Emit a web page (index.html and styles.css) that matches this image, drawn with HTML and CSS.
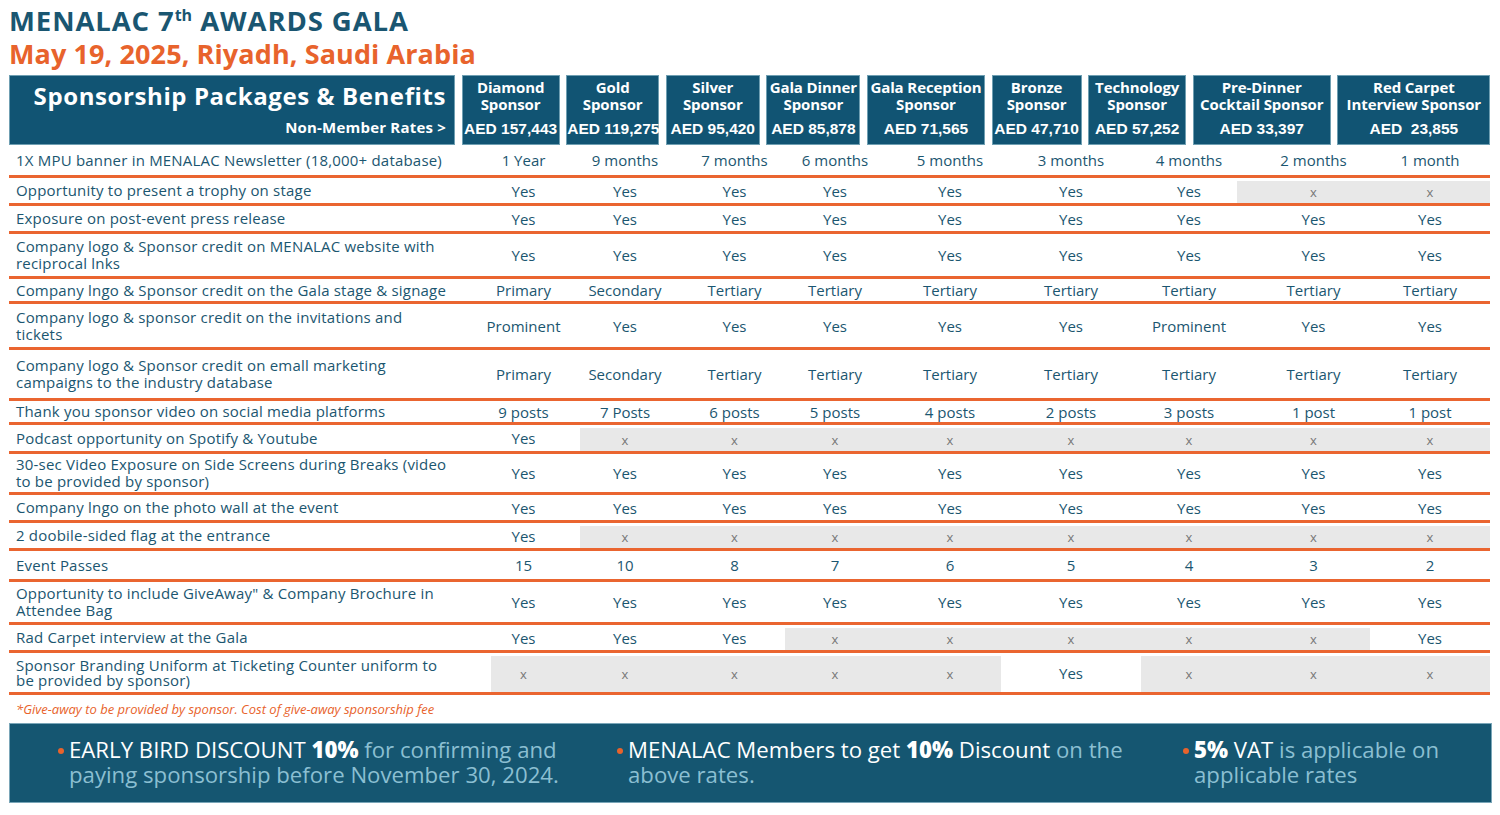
FILE: index.html
```html
<!DOCTYPE html>
<html>
<head>
<meta charset="utf-8">
<link rel="stylesheet" href="styles.css">
</head>
<body>
<div class="page">
  <h1 class="title">MENALAC 7<sup>th</sup> AWARDS GALA</h1>
  <h2 class="subtitle">May 19, 2025, Riyadh, Saudi Arabia</h2>

  <div class="head">
    <div class="hbox main">
      <div class="main-t">Sponsorship Packages &amp; Benefits</div>
      <div class="main-s">Non-Member Rates &gt;</div>
    </div>
    <div class="hbox"><div class="nm">Diamond<br>Sponsor</div><div class="pr">AED 157,443</div></div>
    <div class="hbox"><div class="nm">Gold<br>Sponsor</div><div class="pr">AED 119,275</div></div>
    <div class="hbox"><div class="nm">Silver<br>Sponsor</div><div class="pr">AED 95,420</div></div>
    <div class="hbox"><div class="nm">Gala Dinner<br>Sponsor</div><div class="pr">AED 85,878</div></div>
    <div class="hbox"><div class="nm">Gala Reception<br>Sponsor</div><div class="pr">AED 71,565</div></div>
    <div class="hbox"><div class="nm">Bronze<br>Sponsor</div><div class="pr">AED 47,710</div></div>
    <div class="hbox"><div class="nm">Technology<br>Sponsor</div><div class="pr">AED 57,252</div></div>
    <div class="hbox"><div class="nm">Pre-Dinner<br>Cocktail Sponsor</div><div class="pr">AED 33,397</div></div>
    <div class="hbox"><div class="nm">Red Carpet<br>Interview Sponsor</div><div class="pr">AED&nbsp; 23,855</div></div>
  </div>

  <div class="table">
    <div class="row h33">
      <div class="lbl">1X MPU banner in MENALAC Newsletter (18,000+ database)</div>
      <div class="c">1 Year</div><div class="c">9 months</div><div class="c">7 months</div><div class="c">6 months</div><div class="c">5 months</div><div class="c">3 months</div><div class="c">4 months</div><div class="c">2 months</div><div class="c">1 month</div>
    </div>
    <div class="row h28">
      <div class="lbl">Opportunity to present a trophy on stage</div>
      <div class="c">Yes</div><div class="c">Yes</div><div class="c">Yes</div><div class="c">Yes</div><div class="c">Yes</div><div class="c">Yes</div><div class="c">Yes</div><div class="c no">x</div><div class="c no">x</div>
    </div>
    <div class="row h28">
      <div class="lbl">Exposure on post-event press release</div>
      <div class="c">Yes</div><div class="c">Yes</div><div class="c">Yes</div><div class="c">Yes</div><div class="c">Yes</div><div class="c">Yes</div><div class="c">Yes</div><div class="c">Yes</div><div class="c">Yes</div>
    </div>
    <div class="row h45">
      <div class="lbl">Company logo &amp; Sponsor credit on MENALAC website with<br>reciprocal lnks</div>
      <div class="c">Yes</div><div class="c">Yes</div><div class="c">Yes</div><div class="c">Yes</div><div class="c">Yes</div><div class="c">Yes</div><div class="c">Yes</div><div class="c">Yes</div><div class="c">Yes</div>
    </div>
    <div class="row h25">
      <div class="lbl">Company lngo &amp; Sponsor credit on the Gala stage &amp; signage</div>
      <div class="c">Primary</div><div class="c">Secondary</div><div class="c">Tertiary</div><div class="c">Tertiary</div><div class="c">Tertiary</div><div class="c">Tertiary</div><div class="c">Tertiary</div><div class="c">Tertiary</div><div class="c">Tertiary</div>
    </div>
    <div class="row h46">
      <div class="lbl">Company logo &amp; sponsor credit on the invitations and<br>tickets</div>
      <div class="c">Prominent</div><div class="c">Yes</div><div class="c">Yes</div><div class="c">Yes</div><div class="c">Yes</div><div class="c">Yes</div><div class="c">Prominent</div><div class="c">Yes</div><div class="c">Yes</div>
    </div>
    <div class="row h51">
      <div class="lbl">Company logo &amp; Sponsor credit on emall marketing<br>campaigns to the industry database</div>
      <div class="c">Primary</div><div class="c">Secondary</div><div class="c">Tertiary</div><div class="c">Tertiary</div><div class="c">Tertiary</div><div class="c">Tertiary</div><div class="c">Tertiary</div><div class="c">Tertiary</div><div class="c">Tertiary</div>
    </div>
    <div class="row h24">
      <div class="lbl">Thank you sponsor video on social media platforms</div>
      <div class="c">9 posts</div><div class="c">7 Posts</div><div class="c">6 posts</div><div class="c">5 posts</div><div class="c">4 posts</div><div class="c">2 posts</div><div class="c">3 posts</div><div class="c">1 post</div><div class="c">1 post</div>
    </div>
    <div class="row h29">
      <div class="lbl">Podcast opportunity on Spotify &amp; Youtube</div>
      <div class="c">Yes</div><div class="c no">x</div><div class="c no">x</div><div class="c no">x</div><div class="c no">x</div><div class="c no">x</div><div class="c no">x</div><div class="c no">x</div><div class="c no">x</div>
    </div>
    <div class="row h41">
      <div class="lbl">30-sec Video Exposure on Side Screens during Breaks (video<br>to be provided by sponsor)</div>
      <div class="c">Yes</div><div class="c">Yes</div><div class="c">Yes</div><div class="c">Yes</div><div class="c">Yes</div><div class="c">Yes</div><div class="c">Yes</div><div class="c">Yes</div><div class="c">Yes</div>
    </div>
    <div class="row h28">
      <div class="lbl">Company lngo on the photo wall at the event</div>
      <div class="c">Yes</div><div class="c">Yes</div><div class="c">Yes</div><div class="c">Yes</div><div class="c">Yes</div><div class="c">Yes</div><div class="c">Yes</div><div class="c">Yes</div><div class="c">Yes</div>
    </div>
    <div class="row h28">
      <div class="lbl">2 doobile-sided flag at the entrance</div>
      <div class="c">Yes</div><div class="c no">x</div><div class="c no">x</div><div class="c no">x</div><div class="c no">x</div><div class="c no">x</div><div class="c no">x</div><div class="c no">x</div><div class="c no">x</div>
    </div>
    <div class="row h31">
      <div class="lbl">Event Passes</div>
      <div class="c">15</div><div class="c">10</div><div class="c">8</div><div class="c">7</div><div class="c">6</div><div class="c">5</div><div class="c">4</div><div class="c">3</div><div class="c">2</div>
    </div>
    <div class="row h43">
      <div class="lbl">Opportunity to include GiveAway" &amp; Company Brochure in<br>Attendee Bag</div>
      <div class="c">Yes</div><div class="c">Yes</div><div class="c">Yes</div><div class="c">Yes</div><div class="c">Yes</div><div class="c">Yes</div><div class="c">Yes</div><div class="c">Yes</div><div class="c">Yes</div>
    </div>
    <div class="row h28">
      <div class="lbl">Rad Carpet interview at the Gala</div>
      <div class="c">Yes</div><div class="c">Yes</div><div class="c">Yes</div><div class="c no">x</div><div class="c no">x</div><div class="c no">x</div><div class="c no">x</div><div class="c no">x</div><div class="c">Yes</div>
    </div>
    <div class="row h42">
      <div class="lbl tight">Sponsor Branding Uniform at Ticketing Counter uniform to<br>be provided by sponsor)</div>
      <div class="c no">x</div><div class="c no">x</div><div class="c no">x</div><div class="c no">x</div><div class="c no">x</div><div class="c">Yes</div><div class="c no">x</div><div class="c no">x</div><div class="c no">x</div>
    </div>
  </div>

  <p class="note">*Give-away to be provided by sponsor. Cost of give-away sponsorship fee</p>

  <div class="footer">
    <div class="fcol"><span class="dot"></span><p><span class="w">EARLY BIRD DISCOUNT <b>10%</b></span> for confirming and paying sponsorship before November 30, 2024.</p></div>
    <div class="fcol"><span class="dot"></span><p><span class="w">MENALAC Members to get <b>10%</b> Discount</span> on the above rates.</p></div>
    <div class="fcol"><span class="dot"></span><p><span class="w"><b>5%</b> VAT</span> is applicable on applicable rates</p></div>
  </div>
</div>
</body>
</html>
```

FILE: styles.css
```css
* { box-sizing: border-box; }
html, body { margin: 0; padding: 0; background: #fff; }
body { font-family: "Open Sans", "Noto Sans", sans-serif; color: #1b5670; }

.page { width: 1500px; height: 815px; padding: 4px 0 0 9px; }

.title {
  margin: 0; font-size: 27.5px; line-height: 33px; font-weight: 700;
  color: #1a5671; letter-spacing: 0.9px;
}
.title sup { font-size: 16px; line-height: 0; vertical-align: 10px; letter-spacing: 0; }
.subtitle {
  margin: 0; font-size: 27px; line-height: 33px; font-weight: 700;
  color: #e8632c; letter-spacing: 0.1px;
}

.head {
  display: grid;
  grid-template-columns: 446px 98px 93px 94px 94px 118px 90px 98px 138px 153px;
  column-gap: 6.6px;
  margin-top: 5px;
  height: 70px;
  width: 1482px;
}
.hbox {
  background: #115473;
  border: 1px solid #6f9fb2;
  color: #fff;
  text-align: center;
  padding-top: 3px;
}
.nm { font-weight: 700; font-size: 15px; line-height: 17px; white-space: nowrap; letter-spacing: -0.1px; }
.pr { font-family: "Liberation Sans", Arial, sans-serif; font-weight: 700; font-size: 15.5px; line-height: 18px; margin-top: 7px; white-space: nowrap; }
.main { text-align: right; padding: 2px 8px 0 0; }
.main-t { font-size: 24px; font-weight: 700; line-height: 36px; letter-spacing: 0.6px; }
.main-s { font-size: 15px; font-weight: 700; line-height: 20px; margin-top: 3px; letter-spacing: 0.2px; }

.table { width: 1481px; }
.row {
  display: grid;
  grid-template-columns: 482px 89px 90px 115px 100px 116px 140px 96px 133px 120px;
  border-bottom: 3px solid #ea6530;
}
.h24 { height: 24px; } .h25 { height: 25px; } .h28 { height: 28px; } .h29 { height: 29px; }
.h31 { height: 31px; } .h33 { height: 33px; } .h41 { height: 41px; } .h42 { height: 42px; }
.h43 { height: 43px; } .h45 { height: 45px; } .h46 { height: 46px; } .h51 { height: 51px; }

.lbl {
  display: flex; align-items: center;
  padding: 0 26px 0 7px;
  font-size: 15px; line-height: 17px; color: #1b5670;
  letter-spacing: 0.2px;
  white-space: nowrap;
}
.lbl.tight { line-height: 15px; }
.c {
  display: flex; align-items: center; justify-content: center;
  font-size: 15px; font-weight: 500; color: #1b5670; white-space: nowrap;
}
.row > .c:nth-child(2) { padding-right: 24px; }
.row > .c:nth-child(4) { padding-left: 14px; }
.row > .c:nth-child(6) { padding-left: 14px; }
.row > .c:nth-child(9) { padding-left: 20px; }
.c.no {
  background: #e8e8e8; color: #777; font-size: 13px; font-weight: 400;
  margin: 3px 0 0 0;
}

.note {
  margin: 6px 0 0 7px; font-size: 13px; line-height: 16px;
  font-style: italic; color: #e8632c;
}

.footer {
  margin-top: 6px;
  width: 1483px; height: 80px;
  background: #155671;
  border: 1px solid #7aa6b8;
  display: grid;
  grid-template-columns: 559px 566px 1fr;
  padding: 13px 0 0 48px;
}
.fcol { display: flex; align-items: flex-start; }
.fcol p {
  margin: 0; font-size: 22.2px; line-height: 25px; color: #8bbfd2; font-weight: 400;
  max-width: 510px;
}
.fcol:last-child p { max-width: 265px; }
.fcol .w { color: #fff; }
.fcol b { font-weight: 800; color: #fff; }
.dot {
  width: 6px; height: 6px; border-radius: 50%; background: #e8632c;
  margin: 11px 5px 0 0; flex: none;
}
```
